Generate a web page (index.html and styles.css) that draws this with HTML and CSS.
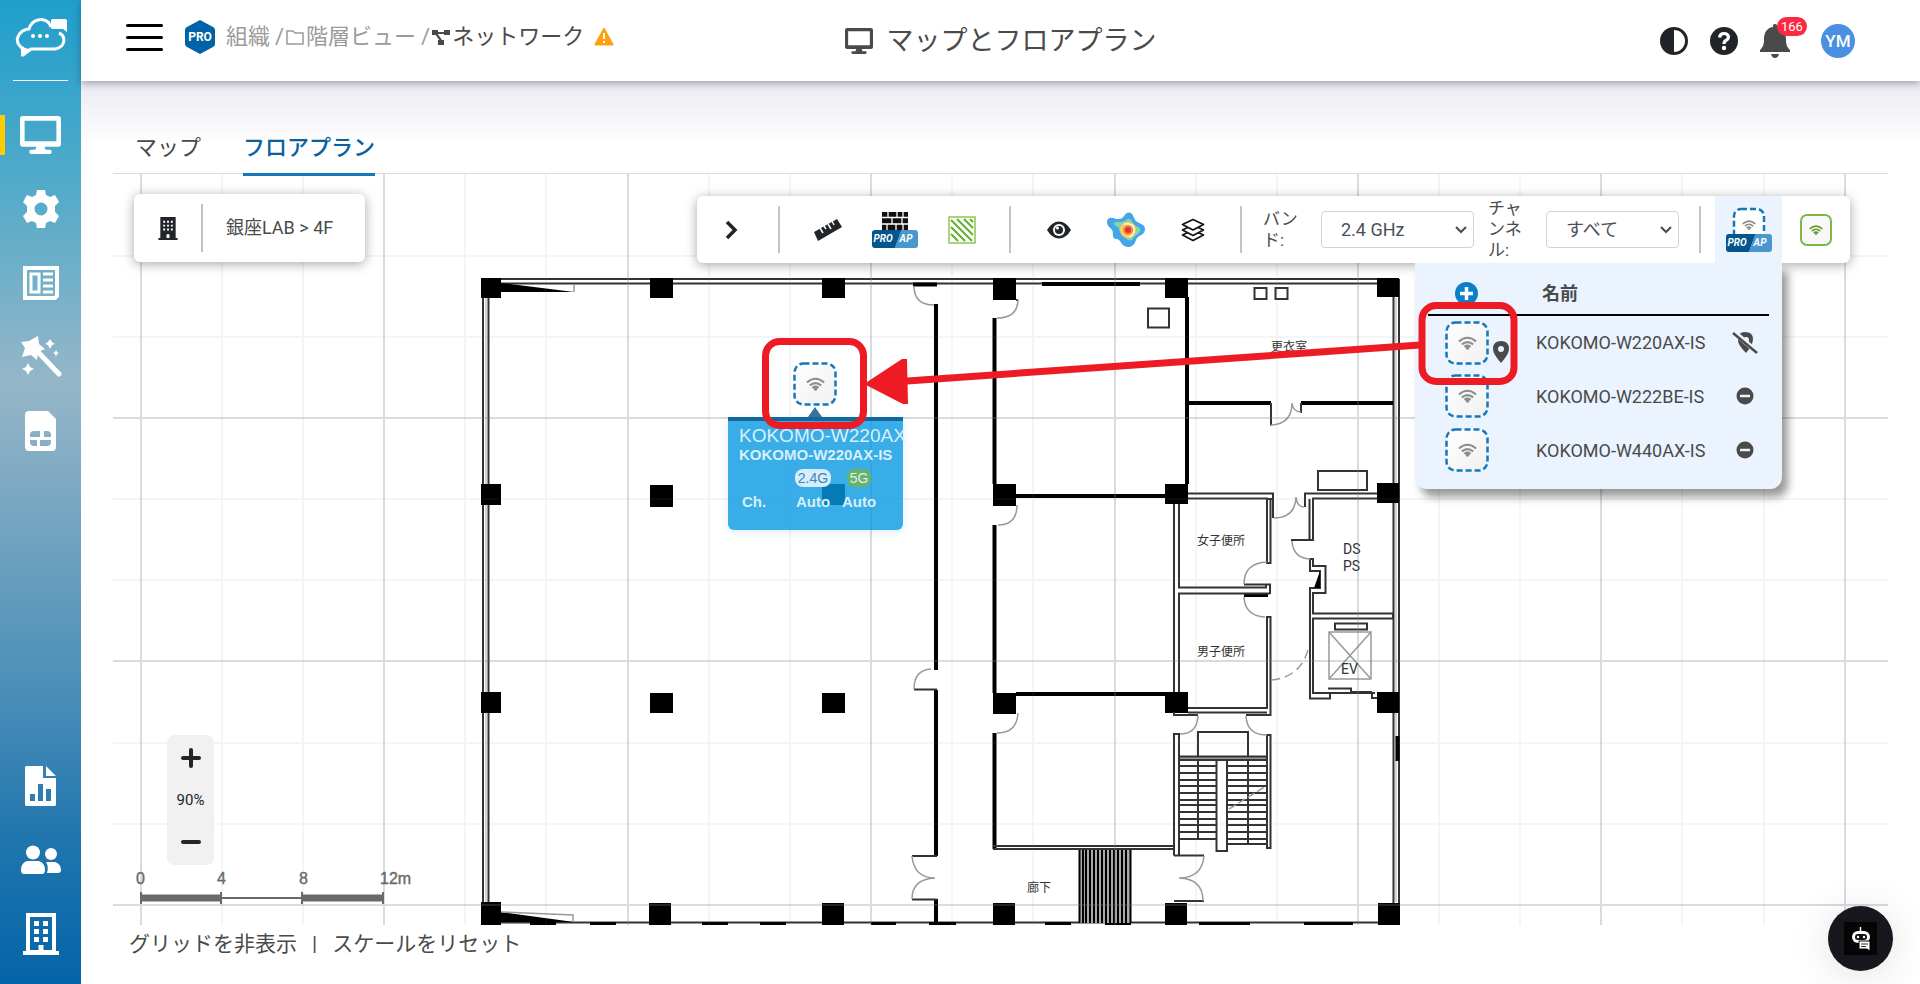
FILE: index.html
```html
<!DOCTYPE html>
<html lang="ja">
<head>
    <meta charset="UTF-8">
    <meta name="viewport" content="width=device-width, initial-scale=1.0">
    <title>マップとフロアプラン</title>
    <link rel="stylesheet" href="styles.css">
</head>
<body>
    <!-- shared icons -->
    <svg class="defs" width="0" height="0" aria-hidden="true">
        <defs>
            <linearGradient id="apFill" x1="0" y1="0" x2="1" y2="1">
                <stop offset="0" stop-color="#fff"/>
                <stop offset="1" stop-color="#f0f0f0"/>
            </linearGradient>
        </defs>
        <symbol id="wifi" viewBox="0 0 20 14">
            <path d="M1 5.500Q10-2.500 19 5.500M4 8.500q6-5 12 0M6.800 11q3.200-2.400 6.400 0" fill="none" stroke="currentColor" stroke-width="2.200"/>
            <circle cx="10" cy="12" r="2" fill="currentColor"/>
        </symbol>
        <symbol id="ap" viewBox="0 0 44 44">
            <rect x="1.500" y="1.500" width="41" height="41" rx="9" fill="url(#apFill)" stroke="#1478b8" stroke-width="2.500" stroke-dasharray="6 3"/>
            <use href="#wifi" x="13" y="15" width="19" height="14"/>
        </symbol>
        <symbol id="monitor" viewBox="0 0 40 37">
            <path fill="currentColor" fill-rule="evenodd" d="M3 0h34q3 0 3 3v24q0 3-3 3H24l1 3h4q2 0 2 2t-2 2H11q-2 0-2-2t2-2h4l1-3H3q-3 0-3-3V3q0-3 3-3zm1.500 4.500v20h31v-20z"/>
        </symbol>
        <symbol id="building" viewBox="0 0 20 24">
            <path fill="currentColor" fill-rule="evenodd" d="M2 0h16v22h2v2H0v-2h2zM5 4v2h2V4zm4 0v2h2V4zm4 0v2h2V4zM5 8v2h2V8zm4 0v2h2V8zm4 0v2h2V8zM5 12v2h2v-2zm4 0v2h2v-2zm4 0v2h2v-2zM8.500 18v4h3v-4z"/>
        </symbol>
        <symbol id="minus" viewBox="0 0 18 18">
            <circle cx="9" cy="9" r="8.500" fill="currentColor"/>
            <path d="M4 9h10" stroke="#ebf3fe" stroke-width="2.500"/>
        </symbol>
    </svg>

    <nav class="sidebar">
        <a href="#" class="logo" aria-label="ホーム">
            <svg width="52" height="40" viewBox="0 0 52 40">
                <path d="M34 5C28-1 17 1 14 11 4 12-1 22 5 28q1 2 3 2v7l8-6h24c11-2 11-13 4-16" fill="none" stroke="#fff" stroke-width="3" stroke-linejoin="round"/>
                <path d="M33 4q2 2 3 5" stroke="#fff" stroke-width="3"/>
                <path d="M37 1h13q2 0 2 2v11l-4-3H37q-1 0-1-1V2z" fill="#fff"/>
                <path d="M6 29v10l8-8z" fill="#fff"/>
                <circle cx="18" cy="18" r="2" fill="#fff"/><circle cx="25" cy="18" r="2" fill="#fff"/><circle cx="32" cy="18" r="2" fill="#fff"/>
            </svg>
        </a>
        <a href="#" class="active" aria-label="モニター"><svg width="41" height="38"><use href="#monitor"/></svg></a>
        <a href="#" aria-label="設定">
            <svg width="40" height="40" viewBox="0 0 40 40">
                <path fill="#fff" fill-rule="evenodd" d="M16 1h8l1 5 4 2 5-2 4 7-4 4v6l4 4-4 7-5-2-4 2-1 5h-8l-1-5-4-2-5 2-4-7 4-4v-6l-4-4 4-7 5 2 4-2zM20 13.500a6.500 6.500 0 1 0 0 13 6.500 6.500 0 0 0 0-13z"/>
            </svg>
        </a>
        <a href="#" aria-label="レポート">
            <svg width="36" height="34" viewBox="0 0 36 34" fill="none" stroke="#fff">
                <path d="M2 2h32v28l-2 2H2z" stroke-width="4"/>
                <path d="M8 8h8v18H8z" stroke-width="3"/>
                <path d="M20 8h10M20 14h10M20 20h10M20 26h10" stroke-width="3"/>
            </svg>
        </a>
        <a href="#" aria-label="ウィザード">
            <svg width="42" height="42" viewBox="0 0 42 42">
                <path d="m18 0 1 8 6 5-7 3-1 8-6-5-9 2 3-9-4-6 8-1z" fill="#fff"/>
                <path d="m18 16 21 22" stroke="#fff" stroke-width="5" stroke-linecap="round"/>
                <path d="m30 3 2 3 3 2-3 1-2 4-2-4-3-1 3-2zM36 14l1 2 2 1-2 1-1 3-1-3-2-1 2-1zM8 27l2 4 4 2-4 2-2 4-2-4-4-2 4-2z" fill="#fff"/>
            </svg>
        </a>
        <a href="#" aria-label="SIM">
            <svg width="32" height="40" viewBox="0 0 32 40">
                <path fill="#fff" fill-rule="evenodd" d="M4 0h19l8 8v28q0 4-4 4H4q-4 0-4-4V4q0-4 4-4zM9 20q-4 0-4 4v2h10v-6zm10 0v6h7v-2q0-4-4-4zM5 29v2q0 4 4 4h3v-6zm10 0v6h7q4 0 4-4v-2z"/>
            </svg>
        </a>
        <a href="#" class="first-bottom" aria-label="統計">
            <svg width="32" height="40" viewBox="0 0 32 40">
                <path fill="#fff" fill-rule="evenodd" d="M1 0h17v12h13v27l-1 1H1l-1-1V1zM5 28v7h5v-7zm8-10v17h5V18zm8 5v12h5V23zM21 0l10 10H21z"/>
            </svg>
        </a>
        <a href="#" aria-label="ユーザー">
            <svg width="42" height="30" viewBox="0 0 42 30" fill="#fff">
                <circle cx="13" cy="7.500" r="7"/><circle cx="31" cy="9" r="6"/>
                <path d="M7 16h12q6 2 6 9 0 4-3 4H4q-3 0-3-4 0-7 6-9zM26 17h9q6 2 6 8 0 3-3 3H27q2-6-1-11z"/>
            </svg>
        </a>
        <a href="#" aria-label="組織">
            <svg width="36" height="42" viewBox="0 0 36 42">
                <path d="M5 2h26v37H5zM0 40h36" fill="none" stroke="#fff" stroke-width="4"/>
                <path d="M11 8h5v5h-5zM20 8h5v5h-5zM11 16h5v5h-5zM20 16h5v5h-5zM11 24h5v5h-5zM20 24h5v5h-5zM15.500 32h5v8h-5z" fill="#fff"/>
            </svg>
        </a>
    </nav>

    <div class="page">
        <header class="header">
            <div class="header-left">
                <button class="menu" aria-label="メニュー"><span></span><span></span><span></span></button>
                <svg class="pro" width="32" height="36" viewBox="0 0 32 36">
                    <path d="M16 1 29 8q2 1 2 3v14q0 2-2 3l-13 7L3 28q-2-1-2-3V11q0-2 2-3z" fill="#0062a8"/>
                    <text x="16" y="22" text-anchor="middle">PRO</text>
                </svg>
                <div class="breadcrumb">
                    <a href="#">組織</a><span class="slash">/</span>
                    <svg width="18" height="15" viewBox="0 0 18 15"><path d="M1 1h6l2 2h8v11H1z" fill="none" stroke="#9b9b9b" stroke-width="1.500"/></svg>
                    <a href="#">階層ビュー</a><span class="slash">/</span>
                    <svg class="net" width="18" height="15" viewBox="0 0 18 15">
                        <path d="M0 0h6v5H0zM12 0h6v5h-6zM6 10h6v5H6zM5 2h8v2H5zM3 4l2-1 5 7-2 1z" fill="#4a4a4a"/>
                    </svg>
                    <span class="current">ネットワーク</span>
                    <svg class="warn" width="20" height="18" viewBox="0 0 20 18">
                        <path d="m10 1 8.500 15.500h-17z" fill="#ff9f0f" stroke="#ff9f0f" stroke-width="2" stroke-linejoin="round"/>
                        <path d="M10 5v6M10 13v2" stroke="#fff" stroke-width="2"/>
                    </svg>
                </div>
            </div>
            <h1><svg width="28" height="26"><use href="#monitor"/></svg>マップとフロアプラン</h1>
            <div class="header-right">
                <button aria-label="テーマ">
                    <svg width="28" height="28" viewBox="0 0 28 28"><circle cx="14" cy="14" r="12.500" fill="#fff" stroke="#212529" stroke-width="3"/><path d="M14 1a13 13 0 0 0 0 26z" fill="#212529"/></svg>
                </button>
                <button aria-label="ヘルプ">
                    <svg width="28" height="28" viewBox="0 0 28 28"><circle cx="14" cy="14" r="14" fill="#212529"/><path d="M9.500 10.500q.5-4 4.500-4t4.500 3.500q0 2-2.500 3.500-2 1-2 3.500" fill="none" stroke="#fff" stroke-width="3.200"/><circle cx="14" cy="21" r="2.200" fill="#fff"/></svg>
                </button>
                <button class="bell" aria-label="通知">
                    <svg width="30" height="34" viewBox="0 0 30 34" fill="#4a4a4a"><path d="M13 1q2-2 4 0v2c7 1 9 7 9 12 0 6 1 8 4 11v2H0v-2c3-3 4-5 4-11 0-5 2-11 9-12zM11 30h8q-1 4-4 4t-4-4z"/></svg>
                    <span class="count">166</span>
                </button>
                <button class="avatar">YM</button>
            </div>
        </header>

        <main>
            <nav class="tabs">
                <a href="#">マップ</a>
                <a href="#" class="selected">フロアプラン</a>
            </nav>

            <div class="canvas">
                <svg class="plan" viewBox="113 174 1775 751" preserveAspectRatio="xMinYMin slice">
                    <!-- outer walls -->
                    <g class="thin">
                        <path d="M482 279H1399M488 283.500H1378M483 279V925M488.500 283V925M1393.500 284V925M1399 279V925M489 922.500H1399"/>
                    </g>
                    <path d="M486 298V902M1396 298V902" stroke="#aaa" stroke-width="1"/>
                    <path d="M501 283 574 292 501 292z"/>
                    <path d="M501 912 574 922 501 922z"/>
                    <path class="fine" d="M574 284v8M501 912l72 3v7"/>
                    <!-- pillars -->
                    <path d="M481 278h20v20h-20zM650 278h23v20h-23zM822 278h23v20h-23zM993 278h23v22h-23zM1165 278h23v20h-23zM1377 278h22v19h-22z
                        M481 484h20v21h-20zM650 485h23v22h-23zM822 484h23v21h-23zM993 484h23v22h-23zM1165 484h23v20h-23zM1377 483h22v20h-22z
                        M481 692h20v21h-20zM650 693h23v20h-23zM822 693h23v20h-23zM993 693h23v21h-23zM1165 692h23v21h-23zM1377 692h22v21h-22z
                        M481 902h20v23h-20zM649 903h22v22h-22zM822 903h22v22h-22zM993 903h22v22h-22zM1165 903h22v22h-22zM1378 903h22v22h-22z"/>
                    <!-- inner walls -->
                    <g class="thick">
                        <path d="M936 304V670M936 690V856M936 899V925M994.500 318V484M994.500 525V693M994.500 733V849M1187 297V484"/>
                        <path d="M1016 496H1165M1016 694H1165M1188 403H1271M1301 403H1393M913 284.500H937M1042 284H1140M1244 595H1268"/>
                        <path d="M530 924H556M590 924H616M702 924H728M760 924H786M871 924H896M929 924H956M1045 924H1071M1105 924H1131M1199 924H1250M1304 924H1353M1397.500 736V761"/>
                    </g>
                    <g class="thin">
                        <path d="M993 846H1174M993 849H1174M1188 493.500H1273V518M1188 498.500H1267V563H1270.500V498.500M1273 499H1267M1377 493.500H1305V507M1377 498.500H1313V540H1291M1309.500 499V540"/>
                        <path d="M1174 504V692M1179 504V587.500H1266V584.500H1244M1266 584.500H1270V594M1179 692V593.500H1270M1174 712V715H1198M1188 708H1267V617H1270.500V715H1246M1188 712.500H1267"/>
                        <path d="M1174 855.500V734H1179V855M1174 855.500H1204M1174 901H1204M1267 756V735H1270.500V848H1267V756"/>
                        <path d="M1271 403V425.500M1301 403V413M914 689.500H937M912 856H937M912 899.500H937M1016 300H1018"/>
                        <path d="M1310 559H1313V566H1325.500V593H1313V613.500H1393V618.500H1313V693H1375M1310 559V571H1320V588H1310V698.500H1330V693.500M1372 693V698H1377"/>
                        <path d="M1148 308.500h21v19h-21zM1254.500 288h12v11h-12zM1275.500 288h12v11h-12zM1318 471h49v19h-49zM1335 623.500h32v6h-32z"/>
                        <path d="M1328 688.500H1351V692H1372" stroke-width="2"/>
                    </g>
                    <path d="M1320 571v17h-6z"/>
                    <!-- doors -->
                    <path class="fine" d="M914 286Q914 305 934 305M931 669Q914 670 914 689M912 856Q914 878 935 878Q912 879 912 899M1018 299Q1018 318 997 318M1271 425Q1292 424 1292 403Q1293 412 1301 412
                        M1017 505Q1017 525 998 525M1018 713Q1017 733 997 733M1274 518Q1295 518 1296 497Q1297 507 1304 507M1267 562Q1244 563 1244 584M1244 597Q1245 616 1265 617
                        M1198 716Q1197 734 1180 734M1246 716Q1247 735 1267 735M1204 856Q1202 878 1179 878Q1203 879 1203 901M1292 541Q1293 558 1310 559"/>
                    <path class="fine" d="M1271 680Q1303 677 1309 645" stroke-dasharray="9 5"/>
                    <!-- elevator -->
                    <path class="fine" d="M1329 632h42v47h-42zL1371 679M1371 632 1329 679"/>
                    <!-- stairs -->
                    <g class="thin">
                        <path d="M1198 839V732H1248V844M1216.500 760V851H1227V760"/>
                        <path d="M1179 766h38M1179 773h38M1179 780h38M1179 786h38M1179 793h38M1179 800h38M1179 805h38M1179 812h38M1179 819h38M1179 825h38M1179 832h38M1179 839h38"/>
                        <path d="M1227 766h40M1227 773h40M1227 780h40M1227 786h40M1227 793h40M1227 800h40M1227 805h40M1227 812h40M1227 819h40M1227 825h40M1227 832h40M1227 839h40M1227 844h40"/>
                        <path d="M1179 756.500H1267V760H1179z" fill="#999"/>
                        <path d="M1079 884H1131"/>
                    </g>
                    <path class="fine" d="M1229 809 1266 786" stroke-dasharray="8 3"/>
                    <path d="M1079 850h52v73h-52z" fill="#aaa"/>
                    <path d="M1079.500 850v73M1083 850v73M1086 850v73M1090 850v73M1094 850v73M1098 850v73M1102 850v73M1106 850v73M1110 850v73M1114 850v73M1118 850v73M1122 850v73M1126 850v73M1130.500 850v73" stroke="#000" stroke-width="2"/>
                    <g class="room">
                        <text x="1271" y="351">更衣室</text>
                        <text x="1197" y="545">女子便所</text>
                        <text x="1197" y="656">男子便所</text>
                        <text x="1027" y="892">廊下</text>
                    </g>
                    <g class="room large">
                        <text x="1343" y="554">DS</text>
                        <text x="1343" y="571">PS</text>
                        <text x="1341" y="674">EV</text>
                    </g>
                    <!-- grid, 4m / 12m -->
                    <path class="minor" d="M222 174V925M303 174V925M465 174V925M546 174V925M709 174V925M790 174V925M952 174V925M1033 174V925M1196 174V925M1277 174V925M1439 174V925M1520 174V925M1682 174V925M1764 174V925
                        M113 256H1888M113 337H1888M113 499H1888M113 580H1888M113 743H1888M113 824H1888"/>
                    <path class="major" d="M141 174V925M384 174V925M628 174V925M871 174V925M1115 174V925M1358 174V925M1601 174V925M1845 174V925M113 418H1888M113 661H1888M113 905H1888"/>
                    <!-- scale bar -->
                    <path d="M140 898h81M302 898h82" stroke="#6a6a6a" stroke-width="7"/>
                    <path d="M221 898h81M141 892v12M221 892v12M302 892v12M383 892v12" stroke="#6a6a6a" stroke-width="2"/>
                    <g class="scale-text">
                        <text x="136" y="884">0</text><text x="217" y="884">4</text><text x="299" y="884">8</text><text x="380" y="884">12m</text>
                    </g>
                </svg>

                <svg class="marker" width="44" height="44"><use href="#ap"/></svg>
                <div class="tip">
                    <div class="tip-name">KOKOMO-W220AX</div>
                    <div class="tip-model">KOKOMO-W220AX-IS</div>
                    <div class="tip-grid">
                        <span></span><span class="band b24">2.4G</span><span class="band b5">5G</span>
                        <span class="ch">Ch.</span><span>Auto</span><span>Auto</span>
                    </div>
                </div>

                <div class="place">
                    <svg width="20" height="23"><use href="#building"/></svg>
                    <span class="place-name">銀座LAB &gt; 4F</span>
                </div>

                <div class="toolbar">
                    <button aria-label="閉じる"><svg width="14" height="20" viewBox="0 0 14 20"><path d="m3 2 8 8-8 8" fill="none" stroke="#212529" stroke-width="3.500"/></svg></button>
                    <i class="sep"></i>
                    <button aria-label="計測">
                        <svg width="28" height="22" viewBox="0 0 28 22"><path d="M0 13 23 0l5 8L4 22z" fill="#212529"/><path d="m6 9 3 5M10 7l2 3M14 5l3 5M18 2l2 4" stroke="#fff" stroke-width="1.500"/></svg>
                    </button>
                    <button class="stack" aria-label="壁">
                        <svg width="26" height="18" viewBox="0 0 26 18"><path d="M0 0h26v18H0z" fill="#111"/><path d="M0 5.500h26M0 12h26M6 0v5M15 0v5M21 0v5M10 6v6M20 6v6M5 12v6M14 12v6M21 12v6" stroke="#fff" stroke-width="1.300"/></svg>
                        <span class="proap"><b>PRO</b><b>AP</b></span>
                    </button>
                    <button aria-label="エリア">
                        <svg width="28" height="28" viewBox="0 0 28 28"><path d="M1 1h26v26H1z" fill="#fff" stroke="#8ac750" stroke-width="1.500"/><path d="M3 4 24 25M3 11l14 14M3 18l7 7M9 3l16 16M16 3l9 9M22 3l3 3" stroke="#64b02f" stroke-width="2"/></svg>
                    </button>
                    <i class="sep"></i>
                    <button aria-label="表示">
                        <svg width="26" height="20" viewBox="0 0 26 20"><path d="M1 10Q6 1.500 13 1.500T25 10q-5 8.500-12 8.500T1 10z" fill="#212529"/><circle cx="13" cy="10" r="6" fill="#fff"/><circle cx="13" cy="10" r="4" fill="#212529"/><circle cx="11.500" cy="8" r="1.500" fill="#fff"/></svg>
                    </button>
                    <button aria-label="ヒートマップ">
                        <svg width="38" height="36" viewBox="0 0 38 36"><path d="M17 4c3-5 8-5 10 2 2 6 11 5 11 11 0 7-7 5-9 11-2 7-8 9-13 5-3-3-3-6-7-6-5-1-2-7-4-9-2-3-5-4-5-8 0-5 5-5 9-3 4 0 6 0 8-3z" fill="#45a5ea"/><path d="M18 9c3-4 6-2 8 2 2 4 9 4 7 8-1 4-6 4-7 8-3 3-6 1-8-2s-6-4-6-8c-1-4-6-3-5-6 1-2 6 0 11-2z" fill="#8bd3a5"/><ellipse cx="21" cy="18" rx="8" ry="8" fill="#f8cf62"/><path d="M17 12q11-1 10 7-1 5-5 6" fill="none" stroke="#fff" stroke-width="1.200"/><circle cx="21" cy="18" r="5" fill="#f58a3c"/><circle cx="21" cy="18" r="3" fill="#dc3636"/></svg>
                    </button>
                    <button aria-label="レイヤー">
                        <svg width="24" height="24" viewBox="0 0 24 24" fill="#fff" stroke="#111" stroke-width="1.700" stroke-linejoin="round"><path d="m12 12 10.500 5L12 22.500 1.500 17z"/><path d="m12 7 10.500 5L12 17.500 1.500 12z"/><path d="m12 1.500 10.500 5L12 12 1.500 6.500z"/></svg>
                    </button>
                    <i class="sep"></i>
                    <label for="band">バンド:</label>
                    <select id="band"><option>2.4 GHz</option><option>5 GHz</option></select>
                    <label for="channel" class="channel-label">チャンネル:</label>
                    <select id="channel" class="channel"><option>すべて</option></select>
                    <i class="sep last"></i>
                    <button class="stack open" aria-label="計画AP">
                        <svg width="34" height="27" viewBox="0 0 34 27"><rect x="2" y="2" width="30" height="32" rx="7" fill="#fff" stroke="#1478b8" stroke-width="2.500" stroke-dasharray="6 3"/><use href="#wifi" x="10" y="12" width="14" height="12"/></svg>
                        <span class="proap"><b>PRO</b><b>AP</b></span>
                    </button>
                    <button class="green" aria-label="AP">
                        <svg width="34" height="34" viewBox="0 0 34 34"><rect x="2" y="2" width="30" height="30" rx="6" fill="#f8f8f8" stroke="#7cb84a" stroke-width="2"/><use href="#wifi" x="10" y="11" width="14" height="12"/></svg>
                    </button>

                    <div class="panel">
                        <table>
                            <thead>
                                <tr>
                                    <th class="c-icon"><button class="add" aria-label="追加"><svg width="23" height="23" viewBox="0 0 23 23"><circle cx="11.500" cy="11.500" r="11.500" fill="#0b7fc7"/><path d="M11.500 5v13M5 11.500h13" stroke="#fff" stroke-width="3.500"/></svg></button></th>
                                    <th class="c-name">名前</th>
                                    <th class="c-act"></th>
                                </tr>
                            </thead>
                            <tbody>
                                <tr>
                                    <td class="c-icon"><svg width="44" height="44"><use href="#ap"/></svg>
                                        <svg class="pin" width="16" height="22" viewBox="0 0 16 22"><path fill="#4a4a4a" fill-rule="evenodd" d="M8 0q8 0 8 8 0 5-8 14Q0 13 0 8q0-8 8-8zm0 5a3 3 0 1 0 0 6 3 3 0 0 0 0-6z"/></svg></td>
                                    <td>KOKOMO-W220AX-IS</td>
                                    <td class="c-act"><button aria-label="配置解除"><svg width="26" height="24" viewBox="0 0 26 24"><path fill="#4a4a4a" fill-rule="evenodd" d="M13 1q8 0 8 7 0 6-7 14Q5 13 6 8q0-7 7-7zm1 5a3 3 0 1 0 0 6 3 3 0 0 0 0-6z"/><path d="M2 1 25 21" stroke="#ebf3fe" stroke-width="5"/><path d="M1 2 25 22" stroke="#4a4a4a" stroke-width="2.500"/></svg></button></td>
                                </tr>
                                <tr>
                                    <td class="c-icon"><svg width="44" height="44"><use href="#ap"/></svg></td>
                                    <td>KOKOMO-W222BE-IS</td>
                                    <td class="c-act"><button aria-label="削除"><svg width="18" height="18"><use href="#minus"/></svg></button></td>
                                </tr>
                                <tr>
                                    <td class="c-icon"><svg width="44" height="44"><use href="#ap"/></svg></td>
                                    <td>KOKOMO-W440AX-IS</td>
                                    <td class="c-act"><button aria-label="削除"><svg width="18" height="18"><use href="#minus"/></svg></button></td>
                                </tr>
                            </tbody>
                        </table>
                    </div>
                </div>

                <div class="zoom">
                    <button aria-label="拡大"><svg width="20" height="20" viewBox="0 0 20 20"><path d="M10 2v16M2 10h16" stroke="#212529" stroke-width="4" stroke-linecap="round"/></svg></button>
                    <span>90%</span>
                    <button aria-label="縮小"><svg width="20" height="20" viewBox="0 0 20 20"><path d="M2 10h16" stroke="#212529" stroke-width="4" stroke-linecap="round"/></svg></button>
                </div>

                <!-- drag hint -->
                <svg class="hint" viewBox="113 174 1775 751" preserveAspectRatio="xMinYMin slice">
                    <g fill="none" stroke="#ed1c24" stroke-width="7">
                        <rect x="765.500" y="341.500" width="98" height="84" rx="14"/>
                        <rect x="1422" y="305.500" width="92" height="76" rx="14"/>
                        <path d="M1420 345 900 381.500"/>
                    </g>
                    <path d="M864 384 902 359h5l1 45h-5z" fill="#ed1c24"/>
                </svg>
            </div>

            <div class="links">
                <a href="#">グリッドを非表示</a><span>|</span><a href="#">スケールをリセット</a>
            </div>
        </main>
    </div>

    <button class="chat" aria-label="チャット">
        <svg width="33" height="33" viewBox="0 0 33 33">
            <path d="M0 0h33v33H0z" fill="#050505"/>
            <path d="M16.500 5v5" stroke="#fff" stroke-width="1.500"/>
            <rect x="8" y="9" width="18" height="12" rx="6" fill="#fff"/>
            <rect x="11" y="12" width="12" height="6" rx="3" fill="#111"/>
            <circle cx="14" cy="15" r="1.200" fill="#fff"/><circle cx="20" cy="15" r="1.200" fill="#fff"/>
            <path d="M15 19h11v10l-3-2h-8z" fill="#fff" stroke="#050505"/>
            <path d="M17 22h7M17 24.500h5" stroke="#333"/>
        </svg>
    </button>
</body>
</html>
```
FILE: styles.css
```css
* {
    box-sizing: border-box;
}
body {
    margin: 0;
    min-height: 100vh;
    display: flex;
    font-family: Roboto, "Noto Sans CJK JP", sans-serif;
    font-size: 18px;
    line-height: 21px;
    color: #4a4a4a;
    background: #fff;
}
a {
    color: inherit;
    text-decoration: none;
}
button {
    padding: 0;
    border: none;
    background: none;
    font-family: inherit;
    color: inherit;
    cursor: pointer;
}
svg {
    display: block;
    flex-shrink: 0;
}
.defs {
    position: absolute;
}

/* sidebar */
.sidebar {
    width: 81px;
    flex-shrink: 0;
    min-height: 100vh;
    display: flex;
    flex-direction: column;
    padding-bottom: 30px;
    color: #fff;
    background: linear-gradient(#1f9fcc 0%, #56abc9 20%, #96b6c8 39%, #4b8fb8 70%, #2176ae 85%, #0464a8 100%);
}
.sidebar a {
    height: 40px;
    margin-bottom: 34px;
    display: flex;
    align-items: center;
    justify-content: center;
}
.sidebar a:last-child {
    margin-bottom: 0;
}
.sidebar .logo {
    height: 81px;
    margin: 0 13px 34px;
    padding-bottom: 5px;
    border-bottom: 1px solid #fff;
}
.sidebar .active {
    border-left: 5px solid #ffcb05;
    padding-right: 5px;
}
.sidebar .first-bottom {
    margin-top: auto;
}

/* header */
.page {
    flex: 1;
    min-width: 0;
    display: flex;
    flex-direction: column;
}
.header {
    height: 81px;
    display: grid;
    grid-template-columns: 1fr auto 1fr;
    align-items: center;
    background: #fff;
    box-shadow: 0 2px 8px rgba(40, 40, 60, 0.4);
    position: relative;
}
.header-left {
    display: flex;
    align-items: center;
    padding: 0 0 7px 45px;
}
.menu {
    width: 37px;
    display: flex;
    flex-direction: column;
    gap: 9px;
}
.menu span {
    height: 3px;
    border-radius: 2px;
    background: #000;
}
.pro {
    margin: 0 10px 0 21px;
}
.pro text {
    font: bold 12px Roboto, sans-serif;
    fill: #fff;
}
.breadcrumb {
    display: flex;
    align-items: center;
    gap: 2px;
    font-size: 22px;
    line-height: 32px;
    color: #9b9b9b;
    white-space: nowrap;
}
.slash {
    margin-left: 3px;
}
.current {
    color: #4a4a4a;
}
.warn {
    margin-left: 8px;
}
.header h1 {
    margin: 0;
    display: flex;
    align-items: center;
    gap: 14px;
    font-size: 27px;
    line-height: 40px;
    font-weight: 400;
    white-space: nowrap;
}
.header-right {
    display: flex;
    justify-content: flex-end;
    align-items: center;
    gap: 22px;
    padding-right: 65px;
}
.bell {
    position: relative;
}
.count {
    position: absolute;
    left: 17px;
    top: -7px;
    padding: 0 4px;
    border-radius: 10px;
    font-size: 13px;
    line-height: 19px;
    color: #fff;
    background: #fb2a41;
}
.avatar {
    width: 34px;
    height: 34px;
    margin-left: 9px;
    border-radius: 50%;
    font-size: 17px;
    font-weight: 500;
    color: #fff;
    background: #4a90e2;
}

/* tabs */
main {
    flex: 1;
    display: flex;
    flex-direction: column;
    padding: 0 32px;
    background: linear-gradient(#ebeaf1, #fff 64px);
}
.tabs {
    height: 93px;
    display: flex;
    align-items: flex-end;
    gap: 42px;
    padding-left: 22px;
    border-bottom: 1px solid #d9dcde;
    font-size: 22px;
    line-height: 28px;
}
.tabs a {
    padding-bottom: 11px;
    border-bottom: 3px solid transparent;
    margin-bottom: -3px;
    position: relative;
    z-index: 1;
}
.tabs .selected {
    color: #0a619f;
    font-weight: 500;
    border-color: #1478b8;
}

/* floor plan */
.canvas {
    flex: 1;
    position: relative;
    min-height: 400px;
}
.plan, .hint {
    position: absolute;
    inset: 0;
    width: 100%;
    height: 100%;
}
.hint {
    pointer-events: none;
}
.plan .thin {
    fill: none;
    stroke: #333;
    stroke-width: 2;
}
.plan .thick {
    fill: none;
    stroke: #000;
    stroke-width: 4;
}
.plan .fine {
    fill: none;
    stroke: #999;
    stroke-width: 1.5;
}
.plan .minor {
    stroke: rgba(110, 130, 140, 0.08);
    stroke-width: 2;
}
.plan .major {
    stroke: rgba(110, 130, 140, 0.28);
    stroke-width: 2;
}
.room {
    font-family: "Noto Sans CJK JP", sans-serif;
    font-size: 12px;
    fill: #333;
}
.large {
    font-family: Roboto, sans-serif;
    font-size: 14px;
}
.scale-text {
    font-family: "Liberation Sans", sans-serif;
    font-size: 16px;
    fill: #6a6a6a;
    stroke: #6a6a6a;
    stroke-width: 0.4;
}
.marker {
    position: absolute;
    left: 680px;
    top: 188px;
    color: #8d8d8d;
}
.tip {
    position: absolute;
    left: 615px;
    top: 243px;
    width: 175px;
    height: 113px;
    padding: 5px 0 0 11px;
    border-top: 4px solid #13679d;
    border-radius: 0 0 6px 6px;
    background: rgba(6, 153, 225, 0.8);
    background-clip: padding-box;
    box-shadow: 0 2px 10px rgba(6, 153, 225, 0.15);
    font-family: "Liberation Sans", sans-serif;
    font-size: 15px;
    font-weight: bold;
    color: #d9effb;
}
.tip::before {
    content: "";
    position: absolute;
    left: 80px;
    top: -14px;
    border: 7px solid transparent;
    border-top: none;
    border-bottom: 10px solid #37719c;
}
.tip-name {
    white-space: nowrap;
    font-size: 19px;
    font-weight: normal;
    line-height: 20px;
}
.tip-model {
    line-height: 18px;
}
.tip-grid {
    display: grid;
    grid-template-columns: 50px 44px 44px;
    align-items: center;
    justify-items: center;
    row-gap: 4px;
    padding-top: 5px;
    column-gap: 2px;
}
.ch {
    justify-self: start;
    padding-left: 3px;
}
.band {
    padding: 0 3px;
    border-radius: 8px;
    font-size: 14px;
    font-weight: normal;
    line-height: 18px;
}
.b24 {
    color: #3f86bd;
    background: #d6edfb;
}
.b5 {
    background: #6ab365;
}
.place {
    position: absolute;
    left: 21px;
    top: 20px;
    height: 68px;
    display: flex;
    align-items: center;
    padding: 0 32px 0 24px;
    border-radius: 6px;
    background: #fff;
    box-shadow: 0 2px 12px rgba(0, 0, 0, 0.35);
}
.place svg {
    color: #212529;
}
.place-name {
    margin-left: 23px;
    padding-left: 23px;
    line-height: 48px;
    border-left: 2px solid #c4c4c4;
}

/* toolbar */
.toolbar {
    position: absolute;
    right: 38px;
    top: 22px;
    height: 67px;
    display: flex;
    align-items: center;
    border-radius: 6px;
    background: #fff;
    box-shadow: 0 2px 12px rgba(0, 0, 0, 0.35);
}
.toolbar > button {
    width: 67px;
    height: 67px;
    display: flex;
    flex-direction: column;
    align-items: center;
    justify-content: center;
}
.sep {
    width: 2px;
    height: 47px;
    margin: 0 14px;
    background: #c4c4c4;
}
.toolbar label {
    width: 36px;
    flex-shrink: 0;
    margin: 0 22px 0 7px;
    font-size: 17px;
}
.toolbar .channel-label {
    margin-left: 14px;
}
.toolbar select {
    appearance: none;
    width: 153px;
    height: 37px;
    padding: 0 19px;
    border: 1px solid #ced4da;
    border-radius: 4px;
    font: inherit;
    color: #495057;
    background: #fff url("data:image/svg+xml,%3Csvg xmlns='http://www.w3.org/2000/svg' width='12' height='8'%3E%3Cpath d='m1 1 5 5 5-5' fill='none' stroke='%23444c54' stroke-width='2'/%3E%3C/svg%3E") no-repeat right 6px center;
}
.toolbar .channel {
    width: 133px;
}
.last {
    margin-left: 20px;
}
.proap {
    display: flex;
    width: 46px;
    border-radius: 3px;
    overflow: hidden;
    font-size: 10px;
    font-style: italic;
    line-height: 18px;
    color: #fff;
    background: linear-gradient(110deg, #03558c 55%, #4a97cf 56%);
}
.proap b {
    flex: 1;
    text-align: center;
}
.toolbar .open {
    color: #8d8d8d;
    background: #ebf3fe;
}
.toolbar .green {
    width: 68px;
    color: #5f9e2c;
}
.panel {
    position: absolute;
    top: 100%;
    right: 68px;
    width: 367px;
    padding: 0 13px 12px;
    border-radius: 0 0 12px 12px;
    background: #ebf3fe;
    box-shadow: 6px 8px 8px rgba(0, 0, 0, 0.4);
}
.panel table {
    width: 100%;
    border-collapse: collapse;
}
.panel th {
    height: 52px;
    padding: 9px 0 0;
    text-align: left;
    border-bottom: 2px solid #000;
}
.panel td {
    height: 54px;
    padding: 0;
}
.panel .c-icon {
    width: 108px;
    padding-left: 17px;
    position: relative;
    color: #8d8d8d;
}
.panel .c-name {
    padding-left: 6px;
}
.panel .c-act {
    width: 49px;
}
.c-act button, .add {
    display: block;
    margin: 0 auto;
}
.add {
    margin: 0 0 0 10px;
}
.pin {
    position: absolute;
    left: 65px;
    top: 25px;
}

/* zoom buttons */
.zoom {
    position: absolute;
    left: 54px;
    bottom: 60px;
    width: 47px;
    height: 130px;
    display: flex;
    flex-direction: column;
    align-items: center;
    justify-content: space-between;
    padding: 13px 0;
    border-radius: 7px;
    font-size: 15px;
    color: #212529;
    background: #f1f1f1;
}
.links {
    height: 59px;
    display: flex;
    gap: 15px;
    padding: 4px 0 0 16px;
    font-size: 21px;
    line-height: 30px;
}
.chat {
    position: fixed;
    right: 27px;
    bottom: 13px;
    width: 65px;
    height: 65px;
    display: flex;
    align-items: center;
    justify-content: center;
    border-radius: 50%;
    background: #17181d;
    box-shadow: 0 4px 40px rgba(0, 0, 0, 0.12);
}
```
